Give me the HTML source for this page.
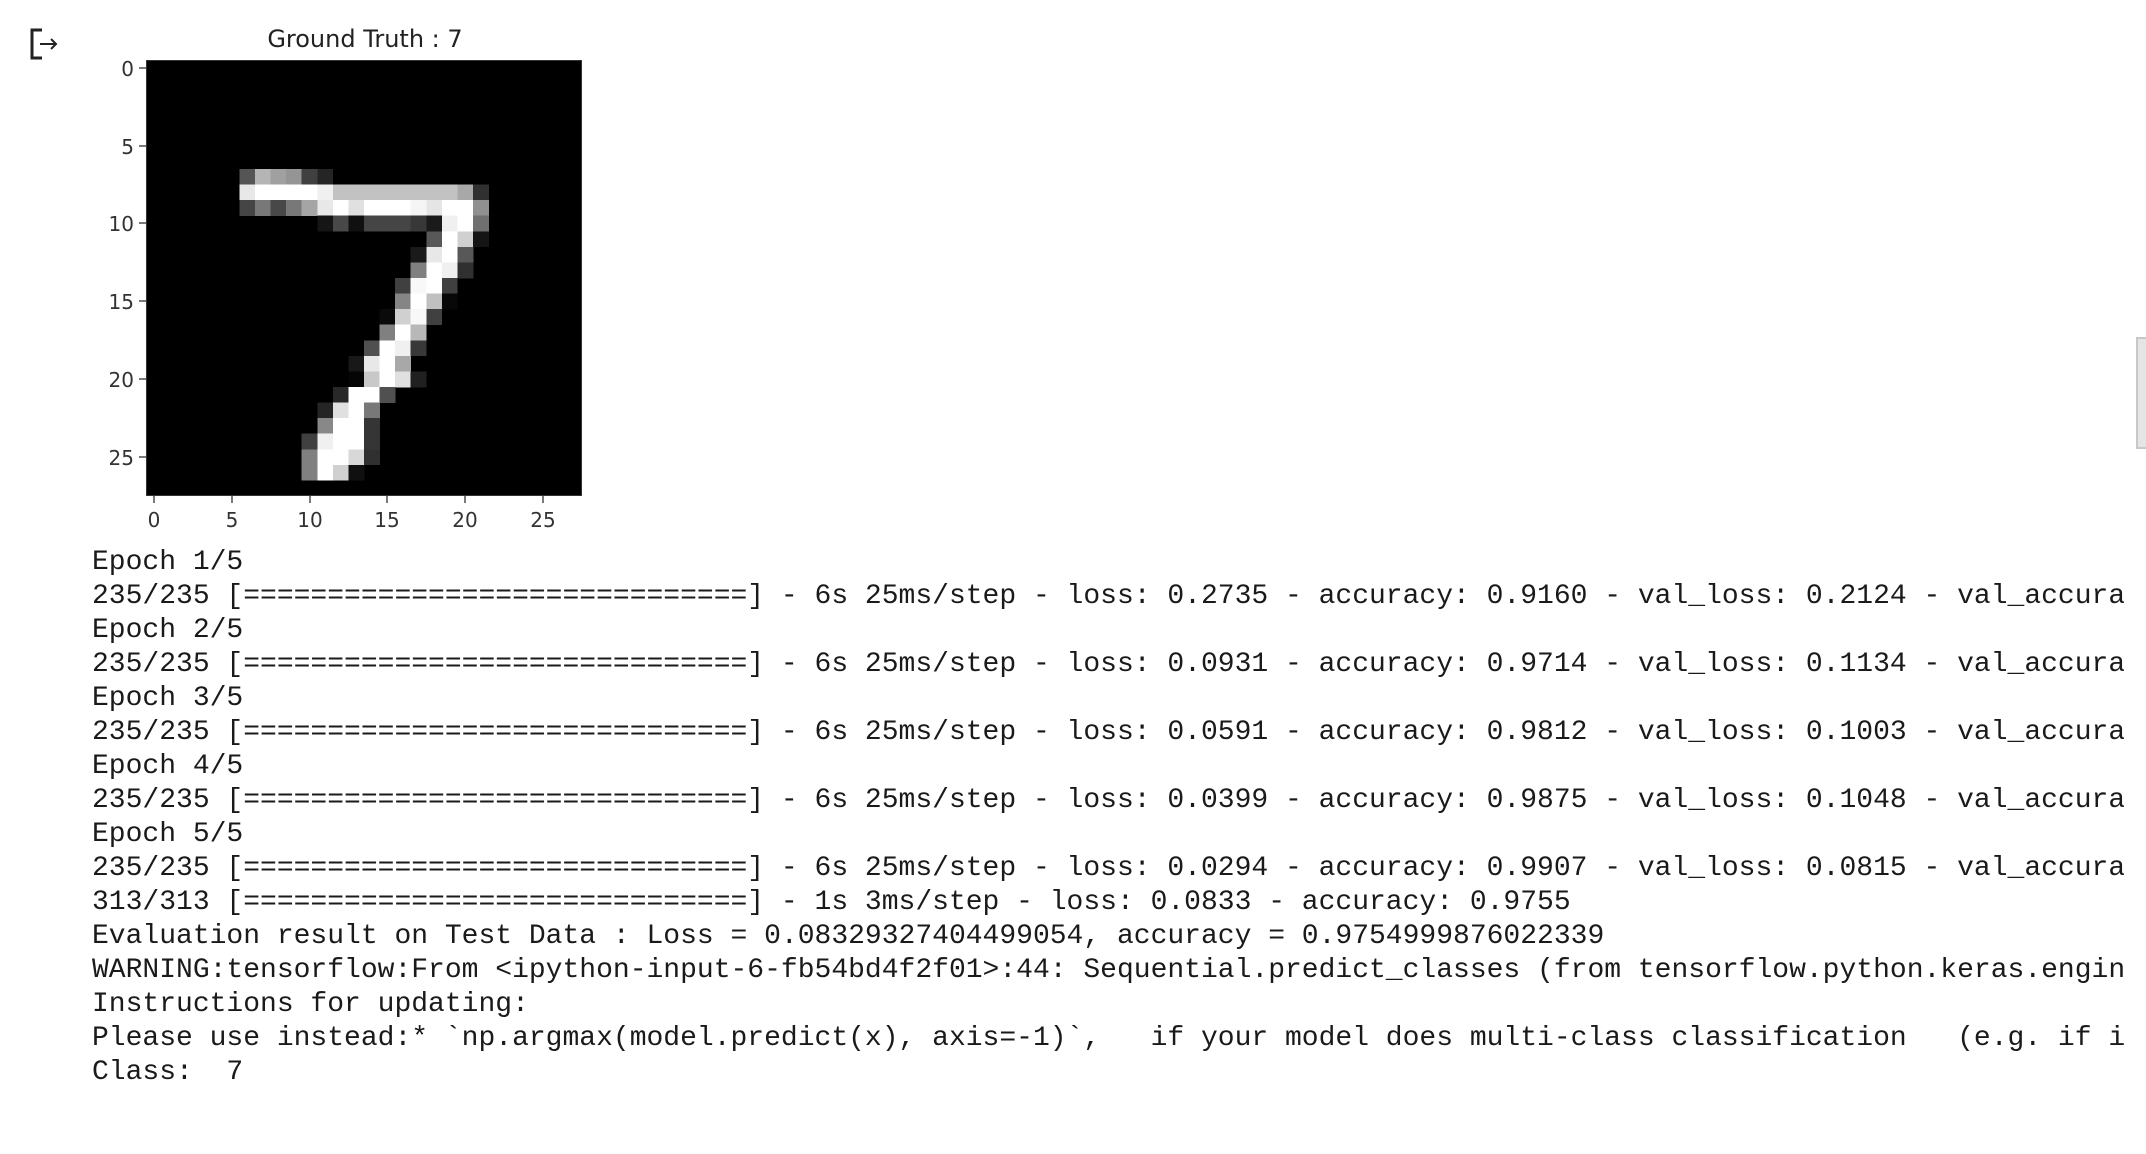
<!DOCTYPE html>
<html><head><meta charset="utf-8"><style>
html,body{margin:0;padding:0;background:#fff;width:2146px;height:1154px;overflow:hidden;position:relative}
.out{position:absolute;left:92px;top:546px;width:2032px;overflow:hidden;white-space:pre;font-family:"Liberation Mono",monospace;font-size:28px;line-height:34px;color:#1a1a1a}
.yl{position:absolute;font-family:"DejaVu Sans","Liberation Sans",sans-serif;font-size:20px;color:#333;text-align:right;width:40px}
.xl{position:absolute;font-family:"DejaVu Sans","Liberation Sans",sans-serif;font-size:20px;color:#333;text-align:center;width:40px}
</style></head><body>
<svg style="position:absolute;left:28px;top:26px" width="34" height="36" viewBox="0 0 34 36"><path d="M14 4H4V32H14" fill="none" stroke="#222" stroke-width="3"/><path d="M12 18H28M23 13L28 18L23 23" fill="none" stroke="#222" stroke-width="2"/></svg>
<div style="position:absolute;left:200px;top:25px;width:330px;text-align:center;font-family:'DejaVu Sans','Liberation Sans',sans-serif;font-size:24px;color:#222">Ground Truth : 7</div>
<svg style="position:absolute;left:146px;top:60px" width="436" height="436" viewBox="0 0 28 28" shape-rendering="crispEdges">
<rect width="28" height="28" fill="#000"/>
<g id="d"></g>
</svg>
<div style="position:absolute;left:146px;top:60px;width:434px;height:434px;border:1px solid #333"></div>
<script>
var rows={7:{6:"55",7:"b5",8:"a0",9:"95",10:"40",11:"25"},
8:{6:"e8",7:"ff",8:"ff",9:"ff",10:"ff",11:"f0",12:"c2",13:"c2",14:"c2",15:"c2",16:"c2",17:"c2",18:"c2",19:"c2",20:"a8",21:"30"},
9:{6:"45",7:"78",8:"48",9:"78",10:"a5",11:"e8",12:"ff",13:"e0",14:"ff",15:"ff",16:"ff",17:"f5",18:"e5",19:"ff",20:"ff",21:"90"},
10:{11:"15",12:"48",13:"10",14:"45",15:"45",16:"45",17:"38",18:"1a",19:"f0",20:"ff",21:"70"},
11:{18:"58",19:"ff",20:"d0",21:"15"},12:{17:"1a",18:"e8",19:"ff",20:"58"},13:{17:"80",18:"ff",19:"f0",20:"30"},
14:{16:"40",17:"f8",18:"ff",19:"40"},15:{16:"85",17:"ff",18:"c0",19:"08"},16:{15:"0a",16:"d0",17:"f8",18:"40"},
17:{15:"80",16:"ff",17:"b8"},18:{14:"50",15:"ff",16:"f0",17:"38"},19:{13:"18",14:"e8",15:"ff",16:"a8"},
20:{13:"05",14:"c8",15:"ff",16:"e0",17:"20"},21:{12:"28",13:"ff",14:"ff",15:"50"},22:{11:"25",12:"e0",13:"ff",14:"78"},
23:{11:"88",12:"ff",13:"ff",14:"35"},24:{10:"40",11:"f0",12:"ff",13:"ff",14:"35"},25:{10:"80",11:"ff",12:"ff",13:"d8",14:"30"},
26:{10:"80",11:"ff",12:"d0",13:"10"}};
var s="";for(var r in rows)for(var c in rows[r]){var v=rows[r][c];s+='<rect x="'+c+'" y="'+r+'" width="1.02" height="1.02" fill="#'+v+v+v+'"/>';}
document.getElementById("d").innerHTML=s;
</script>
<svg style="position:absolute;left:0;top:0" width="600" height="540">
<g stroke="#333" stroke-width="1.3">
<line x1="139" y1="68" x2="146" y2="68"/><line x1="139" y1="146" x2="146" y2="146"/><line x1="139" y1="223" x2="146" y2="223"/><line x1="139" y1="301" x2="146" y2="301"/><line x1="139" y1="379" x2="146" y2="379"/><line x1="139" y1="457" x2="146" y2="457"/>
<line x1="154" y1="496" x2="154" y2="503"/><line x1="232" y1="496" x2="232" y2="503"/><line x1="310" y1="496" x2="310" y2="503"/><line x1="387" y1="496" x2="387" y2="503"/><line x1="465" y1="496" x2="465" y2="503"/><line x1="543" y1="496" x2="543" y2="503"/>
</g></svg>
<div class="yl" style="left:94px;top:57px">0</div>
<div class="yl" style="left:94px;top:135px">5</div>
<div class="yl" style="left:94px;top:212px">10</div>
<div class="yl" style="left:94px;top:290px">15</div>
<div class="yl" style="left:94px;top:368px">20</div>
<div class="yl" style="left:94px;top:446px">25</div>
<div class="xl" style="left:134px;top:508px">0</div>
<div class="xl" style="left:212px;top:508px">5</div>
<div class="xl" style="left:290px;top:508px">10</div>
<div class="xl" style="left:367px;top:508px">15</div>
<div class="xl" style="left:445px;top:508px">20</div>
<div class="xl" style="left:523px;top:508px">25</div>
<div class="out">Epoch 1/5
235/235 [==============================] - 6s 25ms/step - loss: 0.2735 - accuracy: 0.9160 - val_loss: 0.2124 - val_accuracy: 0.9392
Epoch 2/5
235/235 [==============================] - 6s 25ms/step - loss: 0.0931 - accuracy: 0.9714 - val_loss: 0.1134 - val_accuracy: 0.9660
Epoch 3/5
235/235 [==============================] - 6s 25ms/step - loss: 0.0591 - accuracy: 0.9812 - val_loss: 0.1003 - val_accuracy: 0.9700
Epoch 4/5
235/235 [==============================] - 6s 25ms/step - loss: 0.0399 - accuracy: 0.9875 - val_loss: 0.1048 - val_accuracy: 0.9700
Epoch 5/5
235/235 [==============================] - 6s 25ms/step - loss: 0.0294 - accuracy: 0.9907 - val_loss: 0.0815 - val_accuracy: 0.9760
313/313 [==============================] - 1s 3ms/step - loss: 0.0833 - accuracy: 0.9755
Evaluation result on Test Data : Loss = 0.08329327404499054, accuracy = 0.9754999876022339
WARNING:tensorflow:From &lt;ipython-input-6-fb54bd4f2f01&gt;:44: Sequential.predict_classes (from tensorflow.python.keras.engine.sequential)
Instructions for updating:
Please use instead:* `np.argmax(model.predict(x), axis=-1)`,   if your model does multi-class classification   (e.g. if it uses
Class:  7</div>
<div style="position:absolute;left:2136px;top:337px;width:10px;height:112px;background:#e5e5e5;border-left:2px solid #c8c8c8;border-top:2px solid #c8c8c8;border-bottom:2px solid #c8c8c8;box-sizing:border-box"></div>
</body></html>
